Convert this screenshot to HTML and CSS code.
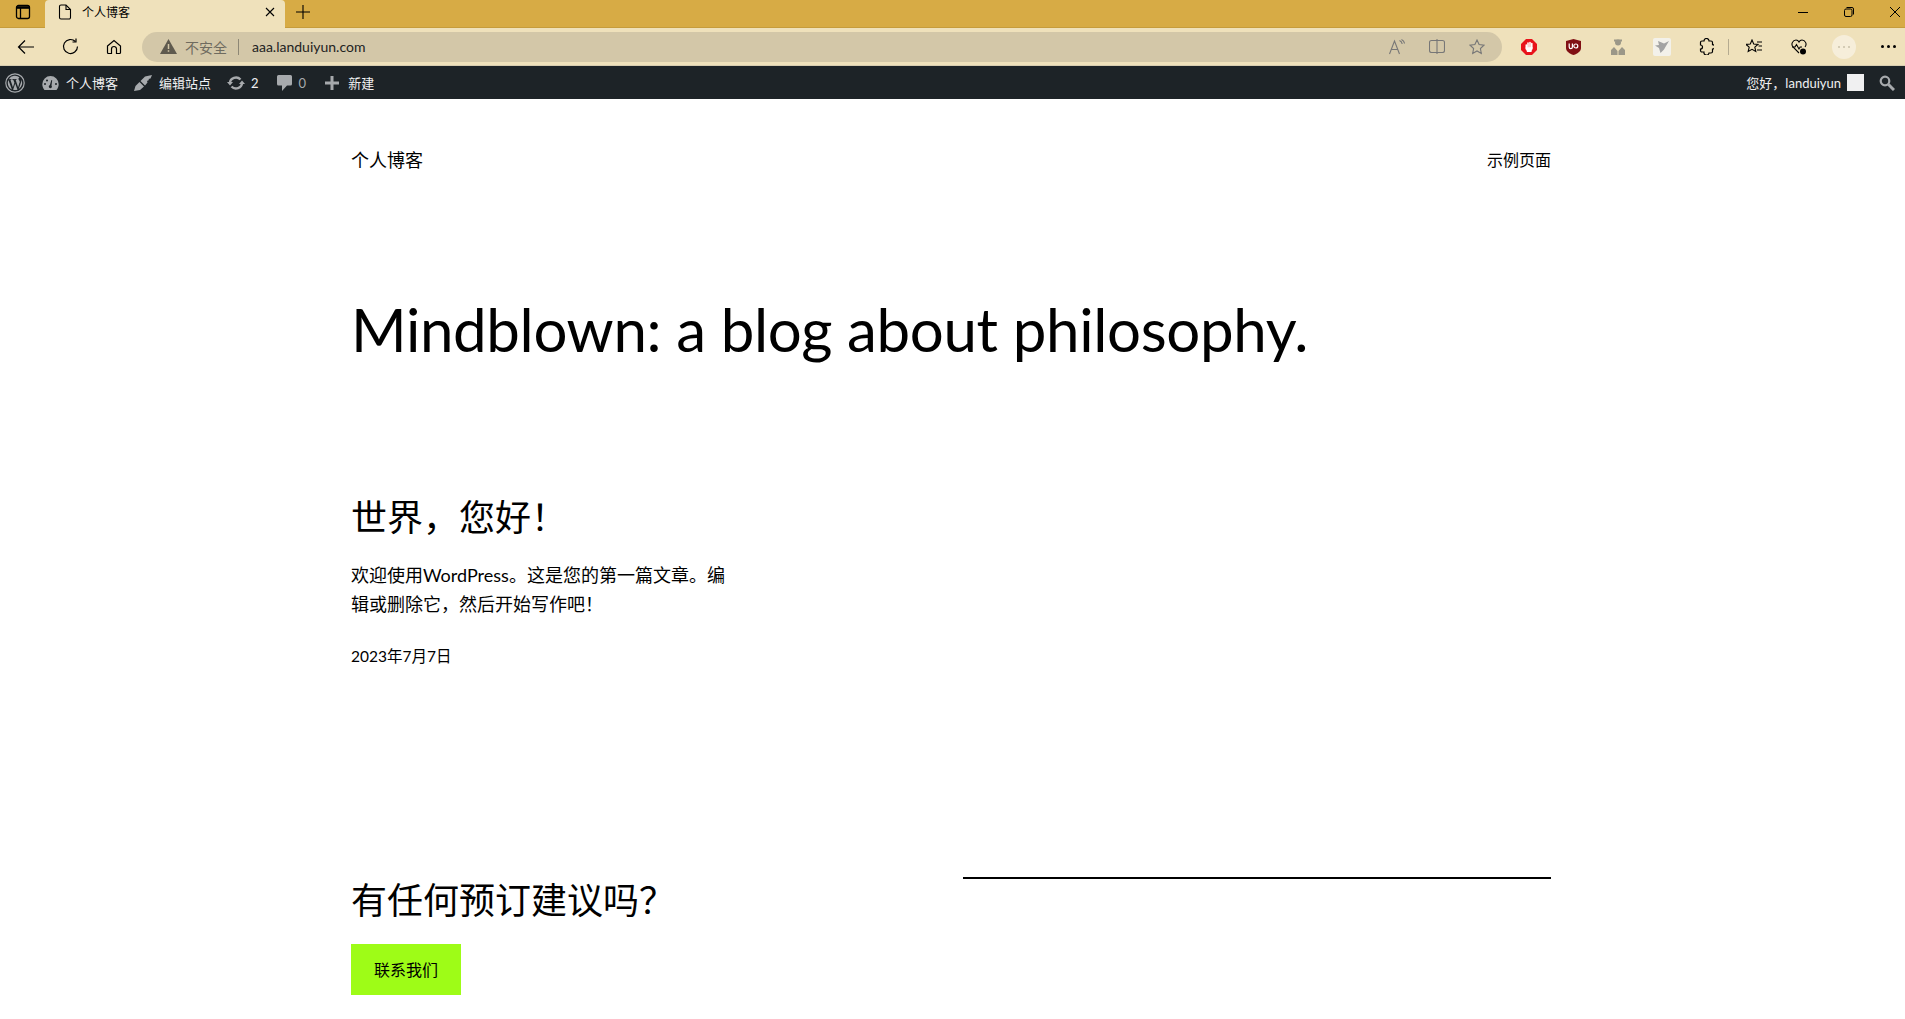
FILE: index.html
```html
<!DOCTYPE html>
<html lang="zh">
<head>
<meta charset="utf-8">
<title>个人博客</title>
<link rel="stylesheet" href="styles.css">
</head>
<body>
<header class="browser">
  <div class="tabstrip">
    <div class="tab-sidebar">
      <svg width="16" height="16" viewBox="0 0 16 16" fill="none" stroke="#000" stroke-width="1.3"><rect x="1.5" y="1.5" width="13" height="13" rx="2"/><path d="M1.500 3.500h13" stroke-width="2.600"/><path d="M5.500 4v10.500"/></svg>
    </div>
    <div class="tab">
      <svg width="14" height="16" viewBox="0 0 14 16" fill="none" stroke="#000" stroke-width="1.1"><path d="M1.500 2.500a1.500 1.500 0 0 1 1.500-1.500h5l4.500 4.500v8a1.500 1.500 0 0 1-1.500 1.500H3a1.500 1.500 0 0 1-1.500-1.500z"/><path d="M8 1v4.500h4.500"/></svg>
      <span class="tab-title">个人博客</span>
      <svg class="tab-close" width="10" height="10" viewBox="0 0 10 10" stroke="#000" stroke-width="1.1"><path d="M1 1l8 8M9 1l-8 8"/></svg>
    </div>
    <svg class="new-tab" width="14" height="14" viewBox="0 0 14 14" stroke="#000" stroke-width="1.100"><path d="M7 0v14M0 7h14"/></svg>
    <div class="win-controls">
      <svg width="12" height="12" viewBox="0 0 12 12" stroke="#000" stroke-width="1"><path d="M1 6.500h10"/></svg>
      <svg width="12" height="12" viewBox="0 0 12 12" fill="none" stroke="#000" stroke-width="1"><rect x="1.500" y="3" width="7.500" height="7.500" rx="1.500"/><path d="M3.500 1.500h5.500a1.500 1.500 0 0 1 1.500 1.500v5.500"/></svg>
      <svg width="12" height="12" viewBox="0 0 12 12" stroke="#000" stroke-width="1"><path d="M1 1l10 10M11 1l-10 10"/></svg>
    </div>
  </div>
  <div class="toolbar">
    <div class="nav-btns">
      <svg width="18" height="16" viewBox="0 0 18 16" fill="none" stroke="#000" stroke-width="1.200"><path d="M17 8H1.500M8 1.500L1.500 8 8 14.500"/></svg>
      <svg width="17" height="17" viewBox="0 0 17 17" fill="none" stroke="#000" stroke-width="1.200"><path d="M15.500 8.500a7 7 0 1 1-2.100-5"/><path d="M14 .5v3.500h-3.500"/></svg>
      <svg width="16" height="16" viewBox="0 0 16 16" fill="none" stroke="#000" stroke-width="1.200"><path d="M1.500 7L8 1.500 14.500 7v6.500a1 1 0 0 1-1 1h-3V10a2.500 2.500 0 0 0-5 0v4.500h-3a1 1 0 0 1-1-1z"/></svg>
    </div>
    <div class="address">
      <svg class="warn" width="17" height="15" viewBox="0 0 17 15"><path d="M8.500 0L17 15H0z" fill="#5f5a4e"/><path d="M8.500 5v5M8.500 11.200v1.500" stroke="#d3c7a8" stroke-width="1.500"/></svg>
      <span class="insecure">不安全</span>
      <span class="addr-sep"></span>
      <span class="url">aaa.landuiyun.com</span>
      <div class="addr-icons">
        <svg width="16" height="16" viewBox="0 0 16 16" fill="none" stroke="#777" stroke-width="1.100"><path d="M.5 15L5.500 2l5 13M2.300 10.500h6.400M10.500 1.500c1.500.6 2.500 1.800 2.700 3.500M12.500.5c1.700.8 2.800 2.200 3 4"/></svg>
        <svg width="16" height="15" viewBox="0 0 16 15" fill="none" stroke="#777" stroke-width="1.100"><rect x=".5" y="1.500" width="15" height="12" rx="2"/><path d="M8 0v15"/></svg>
        <svg width="16" height="16" viewBox="0 0 16 16" fill="none" stroke="#777" stroke-width="1.100"><path d="M8 1l2.100 4.500 4.900.6-3.600 3.400.9 4.900L8 12l-4.300 2.400.9-4.900L1 6.100l4.900-.6z"/></svg>
      </div>
    </div>
    <div class="extensions">
      <div class="cell"><svg width="16" height="16" viewBox="0 0 16 16"><path d="M5 0h6l5 5v6l-5 5H5l-5-5V5z" fill="#e8131b"/><path d="M5.300 6v4M7 4v5M9 3.500V9M10.800 4.500V10" stroke="#fff" stroke-width="1.600" stroke-linecap="round"/><path d="M4.500 8.500l1.500 4.500h4.500l1-5z" fill="#fff"/></svg></div>
      <div class="cell"><svg width="15" height="16" viewBox="0 0 15 16"><path d="M0 2l7.500-2L15 2v7c0 3-3 5.500-7.500 7C3 14.500 0 12 0 9z" fill="#800f14"/><circle cx="9.800" cy="7" r="2" fill="none" stroke="#fff" stroke-width="1.200"/><path d="M3.200 4.500V8a1.600 1.600 0 0 0 3.200 0V4.500" fill="none" stroke="#fff" stroke-width="1.200"/></svg></div>
      <div class="cell"><svg width="14" height="16" viewBox="0 0 14 16" fill="#9b9788"><circle cx="7" cy="3.500" r="3"/><path d="M3 .5h8v2H3zM0 16v-5l3-3 3.500 4v4zM14 16v-5l-3-3-3.500 4v4z"/></svg></div>
      <div class="cell"><div class="ext-bird"><svg width="14" height="14" viewBox="0 0 14 14" fill="#a3a3a3"><path d="M14 1L9 3.500 3 1l1 4-4 .5 4 2.500 1.500 5 3.500-3.500 2-3.500z"/></svg></div></div>
      <div class="cell"><svg width="15" height="17" viewBox="0 0 15 17" fill="none" stroke="#000" stroke-width="1.200"><path d="M5 3H3a1.500 1.500 0 0 0-1.500 1.500V7a2 2 0 0 1 0 4v1.500A1.500 1.500 0 0 0 3 14h2a2.500 2.500 0 0 0 5 1h2a1.500 1.500 0 0 0 1.500-1.500V11a2.200 2.200 0 0 0 0-4.400V4.500A1.500 1.500 0 0 0 12 3h-2a2.500 2.500 0 0 0-5 0z"/></svg></div>
    </div>
    <span class="tool-sep"></span>
    <div class="tools">
      <div class="cell"><svg width="16" height="15" viewBox="0 0 16 15" fill="none" stroke="#000" stroke-width="1.100"><path d="M6 1l1.700 4 4.300.4-3.200 2.800 1 4.300L6 10.300 2.200 12.500l1-4.300L0 5.400 4.300 5zM11 3h5M12.500 7h3.500M11 11h5"/></svg></div>
      <div class="cell"><svg width="16" height="16" viewBox="0 0 16 16" fill="none" stroke="#000" stroke-width="1.100"><path d="M8 14L2 8C-.5 5 2 1 5 1c1.500 0 2.500 1 3 2 .5-1 1.500-2 3-2 3 0 5.500 4 3 7"/><path d="M1 8h3l1.500-2.500L8 10l1.200-2H11"/><circle cx="12" cy="12.500" r="3" fill="#000" stroke="none"/></svg></div>
      <div class="cell"><div class="avatar"><i></i><i></i><i></i></div></div>
      <div class="cell cell-more"><div class="more"><i></i><i></i><i></i></div></div>
    </div>
  </div>
</header>

<nav class="adminbar">
  <div class="ab-left">
    <svg class="wp" width="20" height="20" viewBox="0 0 20 20"><circle cx="10" cy="10" r="9.200" fill="none" stroke="#a7aaad" stroke-width="1.200"/><path d="M2.800 10c0 2.900 1.700 5.300 4.100 6.500L3.400 7.100A7.100 7.100 0 0 0 2.800 10zm12-.4c0-.9-.3-1.500-.6-2-.4-.6-.7-1.100-.7-1.700 0-.7.500-1.300 1.200-1.300A7.200 7.200 0 0 0 3.800 6.200h.5c.8 0 1.900-.1 1.900-.1.400 0 .4.500 0 .6l-.8.100 2.500 7.500 1.500-4.500-1.100-3-.7-.1c-.4 0-.3-.6 0-.6 0 0 1.200.1 1.900.1.800 0 1.900-.1 1.900-.1.400 0 .4.500 0 .6l-.8.100 2.500 7.400.7-2.300c.3-.9.500-1.600.5-2.200zM10.200 10.600l-2.100 6.200a7.200 7.200 0 0 0 4.400-.1l-.1-.1zM16.300 6.600l.1.700c0 .7-.1 1.500-.5 2.500l-2.200 6.300a7.200 7.200 0 0 0 2.600-9.500z" fill="#a7aaad"/></svg>
    <div class="ab-item">
      <svg width="17" height="14" viewBox="0 0 17 14" fill="#a7aaad"><path fill-rule="evenodd" d="M8.500 0A8.200 8.200 0 0 0 .3 8.200c0 2.200.8 4.200 2.200 5.800h12c1.400-1.600 2.200-3.600 2.200-5.800A8.200 8.200 0 0 0 8.500 0zM8.300 12.200a1.700 1.700 0 0 1-.4-3.300L9.400 4l.8.200-.7 5.200a1.700 1.700 0 0 1-1.200 2.800zM3 9a1 1 0 1 1 0-2 1 1 0 0 1 0 2zm2-3.500a1 1 0 1 1 0-2 1 1 0 0 1 0 2zm9 3.500a1 1 0 1 1 0-2 1 1 0 0 1 0 2z"/></svg>
      <span>个人博客</span>
    </div>
    <div class="ab-item">
      <svg width="18" height="18" viewBox="0 0 18 18" fill="#a7aaad"><path d="M0 17l1.500-5 4-4 4.500 4.500-4 3.500zM6.500 7l4.500-4.500L18 1l-1.500 3.500-2 .5.500 1-2 1 .5 1.500-2.500 3z"/></svg>
      <span>编辑站点</span>
    </div>
    <div class="ab-item ab-updates">
      <svg width="18" height="14" viewBox="0 0 18 14" fill="none" stroke="#a7aaad" stroke-width="2.400"><path d="M3 7a6 5.500 0 0 1 10.500-3.500M15 7a6 5.500 0 0 1-10.500 3.500"/><path d="M0 6h6L3 9.500zM18 8h-6l3-3.500z" fill="#a7aaad" stroke="none"/></svg>
      <span>2</span>
    </div>
    <div class="ab-item ab-comment">
      <svg width="15" height="16" viewBox="0 0 15 16" fill="#a7aaad"><path d="M1.500 0h12A1.500 1.500 0 0 1 15 1.500V9a1.500 1.500 0 0 1-1.500 1.500H10L5 16v-5.500H1.500A1.500 1.500 0 0 1 0 9V1.500A1.500 1.500 0 0 1 1.500 0z"/></svg>
      <span>0</span>
    </div>
    <div class="ab-item ab-new">
      <svg width="14" height="14" viewBox="0 0 14 14" fill="#a7aaad"><path d="M5.500 0h3v5.500H14v3H8.500V14h-3V8.500H0v-3h5.500z"/></svg>
      <span>新建</span>
    </div>
  </div>
  <div class="ab-right">
    <span>您好，landuiyun</span>
    <div class="ab-avatar"></div>
    <svg width="16" height="16" viewBox="0 0 16 16" fill="none" stroke="#a7aaad"><circle cx="6" cy="6" r="4.300" stroke-width="2.200"/><path d="M9.500 9.500l5.500 5.500" stroke-width="3"/></svg>
  </div>
</nav>

<main class="site">
  <div class="site-head">
    <a class="site-title">个人博客</a>
    <a class="site-nav">示例页面</a>
  </div>
  <h1 class="hero">Mindblown: a blog about philosophy.</h1>
  <article class="post">
    <h2 class="post-title">世界，您好！</h2>
    <p class="post-body">欢迎使用WordPress。这是您的第一篇文章。编辑或删除它，然后开始写作吧！</p>
    <p class="post-date">2023年7月7日</p>
  </article>
  <section class="cta">
    <div class="cta-left">
      <h2 class="cta-title">有任何预订建议吗？</h2>
      <a class="cta-btn">联系我们</a>
    </div>
    <div class="cta-right"></div>
  </section>
</main>
</body>
</html>
```

FILE: styles.css
```css
* { box-sizing: border-box; }
html, body { margin: 0; padding: 0; height: 1019px; overflow: hidden; background: #fff; }
body { font-family: Lato, "Noto Sans CJK SC", sans-serif; color: #000; }
svg { display: block; flex: none; }

.tabstrip { height: 28px; background: #d7ab45; display: flex; align-items: flex-start; border-bottom: 1px solid #c69c3c; }
.tab-sidebar { width: 45px; height: 24px; display: flex; align-items: center; justify-content: center; }
.tab { width: 240px; height: 28px; background: #efe1bb; border-radius: 4px 4px 0 0; display: flex; align-items: center; padding: 0 10px 5px 13px; }
.tab-title { font-size: 12px; margin-left: 10px; flex: 1; font-family: "Noto Sans CJK SC", sans-serif; }
.new-tab { margin: 5px 0 0 11px; }
.win-controls { margin-left: auto; display: flex; gap: 34px; padding: 6px 4px 0 0; }

.toolbar { height: 38px; background: #efe1bb; display: flex; align-items: center; border-bottom: 1px solid #d8cdb0; }
.nav-btns { display: flex; align-items: center; gap: 27px; padding-left: 17px; width: 142px; flex: none; }
.address { width: 1360px; flex: none; height: 30px; border-radius: 15px; background: #d3c7a8; display: flex; align-items: center; padding-left: 18px; }
.insecure { font-size: 14px; color: #6f6b5f; margin-left: 8px; font-family: "Noto Sans CJK SC", sans-serif; }
.addr-sep { width: 1px; height: 16px; background: #8d8775; margin: 0 13px 0 11px; }
.url { font-size: 14px; color: #222; }
.addr-icons { margin-left: auto; display: flex; align-items: center; gap: 24px; padding-right: 17px; }
.extensions { display: flex; align-items: center; margin-left: 5px; flex: none; }
.extensions .cell { width: 44.300px; }
.cell { height: 30px; display: flex; align-items: center; justify-content: center; flex: none; }
.ext-bird { width: 18px; height: 18px; background: #f3f1ea; border-radius: 2px; display: flex; align-items: center; justify-content: center; }
.tool-sep { width: 1px; height: 16px; background: #b5ab90; margin-right: 2px; flex: none; }
.tools { display: flex; align-items: center; flex: none; }
.tools .cell { width: 45px; }
.tools .cell-more { width: 38px; justify-content: flex-start; padding-left: 15px; }
.avatar { width: 24px; height: 24px; border-radius: 50%; background: #f6eeda; display: flex; align-items: center; justify-content: center; gap: 3px; }
.avatar i { width: 2px; height: 2px; background: #c9c0a8; border-radius: 50%; }
.more { display: flex; gap: 3px; }
.more i { width: 3px; height: 3px; background: #000; border-radius: 50%; }

.adminbar { height: 33px; background: #1d2327; color: #f0f0f1; display: flex; align-items: center; justify-content: space-between; font-size: 13px; }
.ab-left { display: flex; align-items: center; padding-left: 5px; }
.wp { margin-right: 17px; }
.ab-item { display: flex; align-items: center; gap: 7px; margin-right: 16px; }
.ab-updates { gap: 6px; margin-right: 18px; }
.ab-comment span { color: #a7aaad; }
.ab-new { margin-left: 3px; gap: 9px; }
.ab-right { display: flex; align-items: center; padding-right: 10px; }
.ab-avatar { width: 17px; height: 17px; background: #f0f0f1; margin: 0 15px 0 6px; }

.site { width: 1200px; margin-left: 351px; }
.site-head { display: flex; justify-content: space-between; align-items: flex-start; padding-top: 48px; height: 74px; line-height: 26px; }
.site-title { font-size: 18px; }
.site-nav { font-size: 16px; }
.hero { font-size: 60px; font-weight: 400; line-height: 82px; margin: 0; padding-top: 115px; letter-spacing: -0.350px; }
.post { width: 385px; padding-top: 123px; }
.post-title { font-size: 36px; font-weight: 400; line-height: 48px; margin: 0; }
.post-body { font-size: 18px; line-height: 29px; margin: 20px 0 0; }
.post-date { font-size: 15.500px; line-height: 24px; margin: 25px 0 0; }
.cta { display: flex; justify-content: space-between; margin-top: 209px; }
.cta-left { display: flex; flex-direction: column; align-items: flex-start; margin-top: -1px; }
.cta-title { font-size: 36px; font-weight: 400; line-height: 48px; margin: 0; }
.cta-btn { margin-top: 20px; width: 110px; height: 51px; background: #9efc17; font-size: 16px; display: flex; align-items: center; justify-content: center; padding-bottom: 2px; }
.cta-right { width: 588px; height: 2px; background: #000; }
```
